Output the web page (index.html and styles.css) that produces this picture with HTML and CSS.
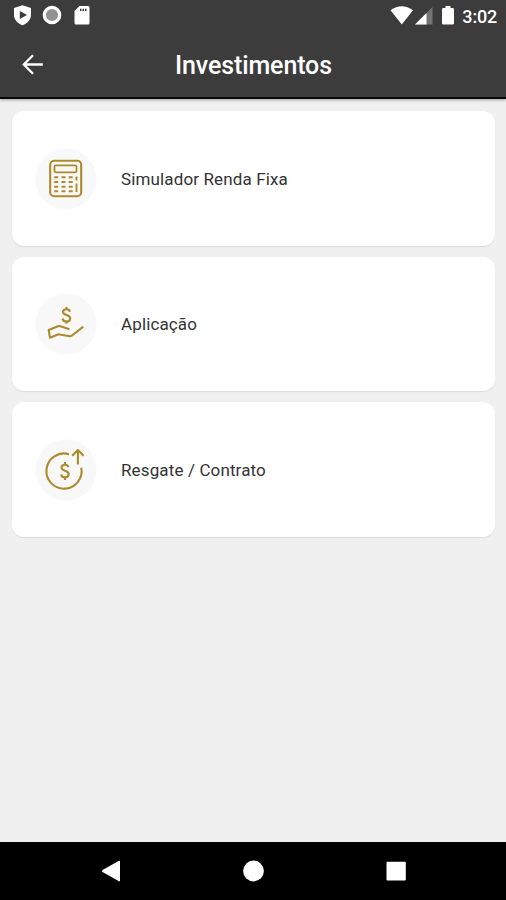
FILE: index.html
```html
<!DOCTYPE html>
<html lang="pt-BR">
<head>
<meta charset="utf-8">
<title>Investimentos</title>
<link rel="stylesheet" href="styles.css">
</head>
<body>
<div class="screen">
  <header class="top">
    <div class="status">
      <svg class="status-left" width="90" height="30" viewBox="0 0 90 30" fill="#fff">
        <path fill-rule="evenodd" d="M22.500 5.300 31 8v6.500c0 5.500-3.500 8.700-8.500 10.700C17.500 23.200 14 20 14 14.500V8zM19.800 11v8l7.200-4z"/>
        <circle cx="52" cy="15" r="7.700" fill="#919191" stroke="#fff" stroke-width="3.200"/>
        <path fill-rule="evenodd" d="M79.500 6H88q1.500 0 1.500 1.500v15.500q0 1.500-1.500 1.500H76q-1.500 0-1.500-1.500V11zM80 8.800v2.200h1.500v-2.200zM82.500 8.800v2.200h1.500v-2.200zM85 8.800v2.200h1.500v-2.200z"/>
      </svg>
      <div class="status-right">
        <svg width="66" height="30" viewBox="390 0 66 30" fill="#fff">
          <path d="M390.500 10.200Q401.700 2.200 413 10.200L401.800 24.500z"/>
          <path d="M432.500 7v17.500h-17.500z" fill="#747474"/>
          <path d="M426.500 13v11.500H415z"/>
          <path d="M445.500 6h5v2h2.200q1.300 0 1.300 1.300v14q0 1.200-1.300 1.200h-9.400q-1.300 0-1.300-1.200v-14q0-1.300 1.300-1.300h2.200z"/>
        </svg>
        <span class="clock">3:02</span>
      </div>
    </div>
    <div class="bar">
      <svg class="back" width="22" height="22" viewBox="0 0 22 22" fill="none" stroke="#fff" stroke-width="2.300"><path d="M20.800 11.500H2.500M11 2.300 1.800 11.500 11 20.700"/></svg>
      <h1 class="title">Investimentos</h1>
    </div>
  </header>
  <main class="list">
    <a class="card">
      <svg class="icon" viewBox="0 0 62 62">
        <circle class="disc" cx="31" cy="31" r="30.500"/>
        <g class="line">
          <rect x="15.200" y="12.800" width="31" height="35.400" rx="4"/>
          <rect x="19.500" y="17.300" width="22" height="7" rx="1.200" stroke-width="1.800"/>
          <path stroke-width="1.900" d="M19.200 29.300h4M26.500 29.300h4M33.700 29.300h4M19.200 34h4M26.500 34h4M33.700 34h4M19.200 38.700h4M26.500 38.700h4M33.700 38.700h4M19.200 43.300h4M26.500 43.300h4M33.700 43.300h4M41.500 28.500v4M41.500 35.500v8.500"/>
        </g>
      </svg>
      <span class="label">Simulador Renda Fixa</span>
    </a>
    <a class="card">
      <svg class="icon" viewBox="0 0 62 62">
        <circle class="disc" cx="31" cy="31" r="30.500"/>
        <g class="line">
          <path d="M34.900 18.800C34.500 16.900 33.200 16.300 31.500 16.300c-2.100 0-3.500 1.100-3.500 2.800 0 4 7.200 2 7.200 6.300 0 1.900-1.500 3.100-3.700 3.100-2.200 0-3.600-1-3.900-3M31.500 14v2.300M31.500 28.500v2.300"/>
          <path d="M34.500 36.300 25.500 33.300Q24.200 32.800 22.900 33.300L13.700 36.900 15 44.800 22.300 41.700Q23.500 41.200 24.800 41.500L34.600 43.200Q36 43.400 37 42.500L48.300 33.600"/>
        </g>
      </svg>
      <span class="label">Aplicação</span>
    </a>
    <a class="card">
      <svg class="icon" viewBox="0 0 62 62">
        <circle class="disc" cx="31" cy="31" r="30.500"/>
        <g class="line">
          <path d="M34 15.200A17.600 17.600 0 1 0 46.300 28.800"/>
          <path d="M42.900 25.500V11.500M37.200 16.800l5.700-5.700 5.700 5.700"/>
          <path d="M33.400 28.200C33 26.300 31.700 25.700 30 25.700c-2.100 0-3.500 1.100-3.500 2.900 0 4.200 7.200 2.200 7.200 6.600 0 1.900-1.500 3.100-3.700 3.100-2.200 0-3.600-1-3.900-3M30 23v2.700M30 38.300v2.700"/>
        </g>
      </svg>
      <span class="label">Resgate / Contrato</span>
    </a>
  </main>
  <nav class="nav">
    <svg width="506" height="58" viewBox="0 0 506 58" fill="#fff">
      <path d="M102.500 28 119 18.800q1-.5 1 .5v19.400q0 1-1 .5L102.500 30q-1-1 0-2z"/>
      <circle cx="253.500" cy="29" r="10.400"/>
      <rect x="386.500" y="19.700" width="19.300" height="18.800" rx="1"/>
    </svg>
  </nav>
</div>
</body>
</html>
```
FILE: styles.css
```css
* { box-sizing: border-box; }

body {
  margin: 0;
  font-family: Roboto, "Liberation Sans", sans-serif;
}

svg { display: block; }

.screen {
  width: 506px;
  height: 900px;
  display: flex;
  flex-direction: column;
  background: #f0f0f0;
}

.top {
  height: 99px;
  background: #3c3c3c;
  border-bottom: 2px solid #080808;
  box-shadow: 0 1px 3px rgba(0, 0, 0, .35);
}

.status {
  height: 31px;
  display: flex;
  justify-content: space-between;
}

.status-right {
  display: flex;
  padding-right: 9px;
  gap: 6px;
}

.clock {
  color: #fff;
  font-size: 18px;
  font-weight: 500;
  line-height: 33px;
  letter-spacing: -.2px;
}

.bar {
  height: 66px;
  padding-left: 22px;
  display: grid;
  grid-template-columns: 22px 1fr 43px;
  align-items: center;
}

.title {
  margin: 3px 0 0;
  color: #fff;
  font-size: 25px;
  font-weight: 500;
  line-height: 30px;
  letter-spacing: -.12px;
  text-align: center;
}

.list {
  flex: 1;
  padding: 12px 11px 0 12px;
  display: flex;
  flex-direction: column;
  gap: 11px;
}

.card {
  height: 134.500px;
  padding: 1px 0 0 22.500px;
  display: flex;
  align-items: center;
  gap: 24.500px;
  background: #fff;
  border-radius: 12px;
  box-shadow: 0 1px 1px rgba(0, 0, 0, .09);
}

.icon {
  width: 62px;
  height: 62px;
}

.disc { fill: #f8f8f8; }

.line {
  fill: none;
  stroke: #ad8a2c;
  stroke-width: 2.100;
  stroke-linejoin: round;
}

.label {
  color: #333;
  font-size: 17px;
  line-height: 24px;
  letter-spacing: .13px;
}

.nav {
  height: 58px;
  background: #000;
}
```
